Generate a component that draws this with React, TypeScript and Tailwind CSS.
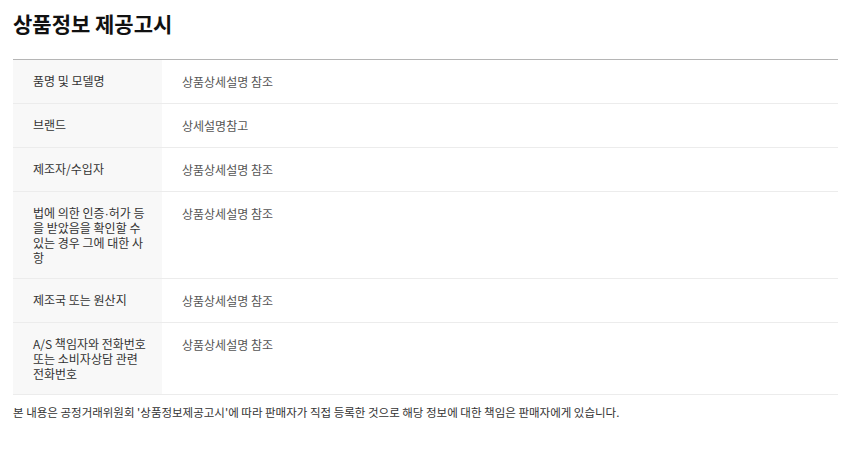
const rows = [
  { label: '품명 및 모델명', value: '상품상세설명 참조' },
  { label: '브랜드', value: '상세설명참고' },
  { label: '제조자/수입자', value: '상품상세설명 참조' },
  {
    label: (
      <>
        법에 의한 인증<span className="leading-none" style={{ fontFamily: '"Liberation Sans", sans-serif' }}>·</span>허가 등을 받았음을 확인할 수 있는 경우 그에 대한 사항
      </>
    ),
    value: '상품상세설명 참조',
  },
  { label: '제조국 또는 원산지', value: '상품상세설명 참조' },
  { label: 'A/S 책임자와 전화번호 또는 소비자상담 관련 전화번호', value: '상품상세설명 참조' },
]

export default function App() {
  return (
    <div
      className="bg-white pl-[13px] pr-[12px] pt-[8px]"
      style={{ fontFamily: '"Noto Sans CJK KR", "Noto Sans", sans-serif' }}
    >
      <h2 className="text-[21px] font-bold leading-[30px] text-[#111]">상품정보 제공고시</h2>

      <div className="mt-[21px] border-t border-[#b5b5b5]">
        {rows.map((r, i) => (
          <div key={i} className="flex border-b border-[#ececec]">
            <div className="w-[149px] shrink-0 bg-[#f8f8f8] pl-[20px] pr-[11px] py-[13px] text-[12px] leading-[15px] text-[#333]">
              {r.label}
            </div>
            <div className="flex-1 px-[20px] py-[13px] text-[12px] leading-[17px] text-[#555]">
              {r.value}
            </div>
          </div>
        ))}
      </div>

      <p className="mt-[10px] text-[11.5px] leading-[15px] text-[#333]">
        본 내용은 공정거래위원회 '상품정보제공고시'에 따라 판매자가 직접 등록한 것으로 해당 정보에 대한 책임은 판매자에게 있습니다.
      </p>
    </div>
  )
}
